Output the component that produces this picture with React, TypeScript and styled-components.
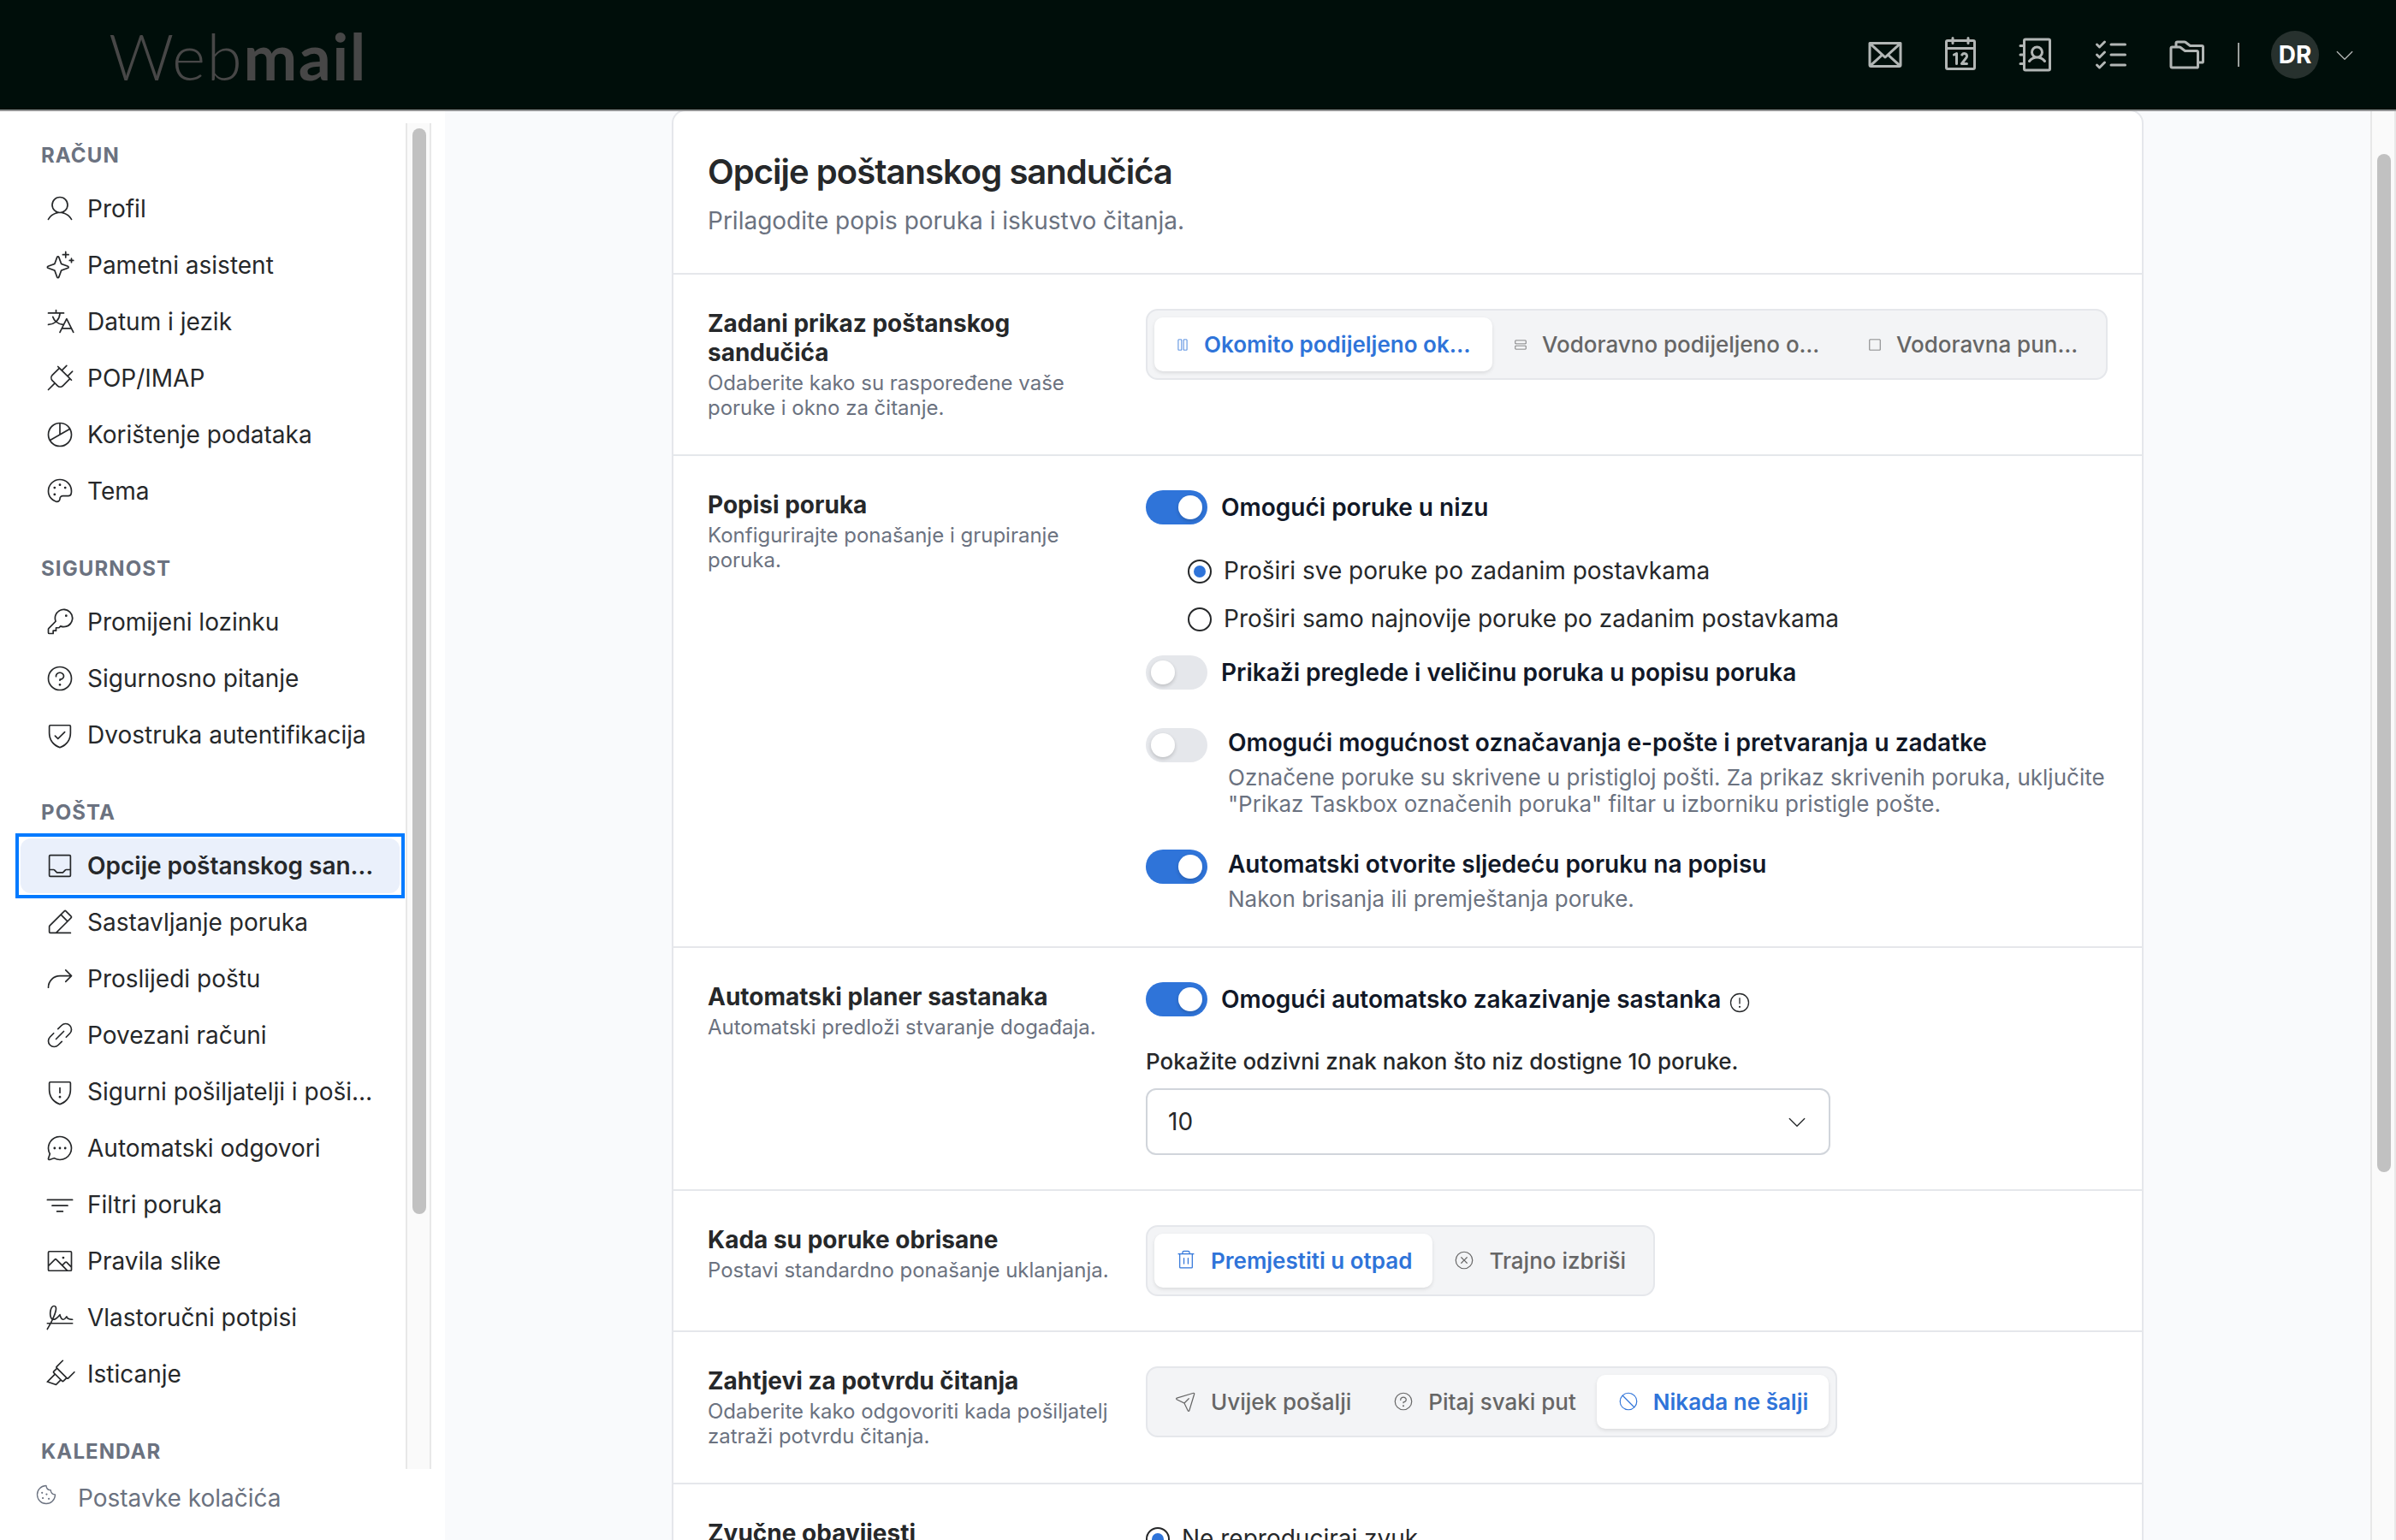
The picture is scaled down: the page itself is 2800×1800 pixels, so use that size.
import React from "react";
import styled, { createGlobalStyle } from "styled-components";
import type { IconType } from "react-icons";
import {
  PiEnvelope, PiCalendar, PiAddressBook, PiListChecks, PiFolders, PiCaretDownLight,
  PiUserLight, PiSparkleLight, PiTranslateLight, PiPlugLight, PiChartPieLight, PiPaletteLight,
  PiKeyLight, PiQuestionLight, PiShieldCheckLight, PiTrayLight, PiPencilSimpleLineLight,
  PiArrowBendUpRightLight, PiLinkSimpleLight, PiShieldWarningLight, PiChatCircleDotsLight,
  PiFunnelSimpleLight, PiImageLight, PiSignatureLight, PiHighlighterLight, PiCookieLight,
  PiWarningCircleLight, PiTrashLight, PiXCircleLight, PiPaperPlaneTiltLight, PiProhibitLight,
  PiColumnsLight, PiRowsLight, PiSquareLight,
} from "react-icons/pi";

const ink = "#26282a";
const muted = "#6b7280";
const line = "#e5e7eb";
const accent = "#2f74d9";

const GlobalStyle = createGlobalStyle`
  *, *::before, *::after { box-sizing: border-box; }
  body {
    margin: 0;
    font-family: Inter, "Liberation Sans", sans-serif;
    color: ${ink};
    background: #f9fafc;
    overflow: hidden;
  }
  svg { display: block; flex: none; }
`;

const Page = styled.div`
  display: flex;
  flex-direction: column;
  width: 2800px;
  height: 1800px;
  overflow: hidden;
`;

/* Header */
const Header = styled.header`
  flex: none;
  display: flex;
  align-items: center;
  justify-content: space-between;
  height: 130px;
  padding: 0 46px 0 127px;
  background: #000e0a;
  border-bottom: 2px solid #929394;
`;
const Logo = styled.div`
  padding-top: 1px;
  font: 300 75px/92px Lato, sans-serif;
  color: #474747;
  letter-spacing: 1.5px;
  b { font-weight: 700; }
`;
const HeaderTools = styled.nav`
  display: flex;
  align-items: center;
  color: #b2b6b5;
`;
const ToolIcons = styled.div`
  display: flex;
  gap: 40px;
`;
const Divider = styled.span`
  width: 2px;
  height: 28px;
  margin: 0 37px 0 36px;
  background: #9a9f9d;
`;
const Avatar = styled.span`
  display: flex;
  align-items: center;
  justify-content: center;
  width: 56px;
  height: 56px;
  margin-right: 16px;
  border-radius: 50%;
  background: #27312e;
  color: #fff;
  font-size: 28px;
  font-weight: 700;
`;

const Body = styled.div`
  flex: 1;
  display: flex;
  min-height: 0;
`;

/* Sidebar */
const Sidebar = styled.aside`
  flex: none;
  display: flex;
  flex-direction: column;
  width: 520px;
  padding-top: 14px;
  background: #fff;
`;
const NavScroller = styled.div`
  flex: none;
  display: flex;
  height: 1573px;
`;
const NavList = styled.nav`
  width: 474px;
  height: 100%;
  padding: 0 7px 0 24px;
  overflow: hidden;
`;
const Group = styled.section`
  padding-top: 44px;
  &:first-child { padding-top: 23px; }
`;
const GroupTitle = styled.h2`
  margin: 0;
  padding: 0 24px 15px;
  font-size: 24px;
  line-height: 30px;
  font-weight: 700;
  letter-spacing: 1.1px;
  color: ${muted};
`;
const Items = styled.div`
  display: flex;
  flex-direction: column;
  gap: 2px;
`;
const NavItem = styled.a<{ $active?: boolean }>`
  display: flex;
  align-items: center;
  gap: 14px;
  height: 64px;
  padding: 0 28px;
  border-radius: 12px;
  font-size: 28px;
  white-space: nowrap;
  font-weight: ${(p) => (p.$active ? 600 : 400)};
  background: ${(p) => (p.$active ? "#eaf0fb" : "transparent")};
`;
/* Square keyboard-focus ring around the rounded link */
const FocusRing = styled.div<{ $on?: boolean }>`
  outline: ${(p) => (p.$on ? "4px solid #007aff" : "none")};
  outline-offset: 2px;
`;
const CookieLink = styled.a`
  display: flex;
  align-items: center;
  gap: 23px;
  padding: 16px 0 0 40px;
  font-size: 28px;
  line-height: 34px;
  color: ${muted};
  svg { margin-bottom: 8px; }
`;

const Track = styled.div<{ $top: number }>`
  flex: none;
  width: 30px;
  padding: ${(p) => p.$top}px 6px 0;
  background: #fafafa;
  border: solid #e8e8e8;
  border-width: 0 2px;
`;
const Thumb = styled.div<{ $h: number }>`
  width: 16px;
  height: ${(p) => p.$h}px;
  border-radius: 8px;
  background: #c1c1c1;
`;

/* Content */
const Main = styled.main`
  flex: 1;
  display: flex;
  justify-content: center;
  overflow: hidden;
`;
const Card = styled.div`
  flex: none;
  width: 1720px;
  height: 2000px;
  margin-top: -2px;
  background: #fff;
  border: 2px solid ${line};
  border-radius: 16px;
`;
const CardHead = styled.div`
  height: 191px;
  padding: 47px 40px 0;
  border-bottom: 2px solid ${line};
`;
const Title = styled.h1`
  margin: 0;
  font-size: 40px;
  line-height: 48px;
  font-weight: 600;
  letter-spacing: -0.98px;
`;
const Subtitle = styled.p`
  margin: 16px 0 0;
  font-size: 28px;
  line-height: 34px;
  color: ${muted};
`;
const Row = styled.section`
  display: grid;
  grid-template-columns: 472px 1124px;
  column-gap: 40px;
  padding: 40px;
  border-bottom: 2px solid ${line};
`;
const Intro = styled.div`
  padding-top: 1px;
  margin-bottom: -1px;
`;
const RowTitle = styled.h3`
  margin: 0;
  font-size: 28px;
  line-height: 33.6px;
  font-weight: 700;
`;
const RowText = styled.p`
  margin: 5px 0 0;
  font-size: 24px;
  line-height: 28.8px;
  color: ${muted};
`;
const Controls = styled.div<{ $top?: number }>`
  display: flex;
  flex-direction: column;
  align-items: flex-start;
  padding-top: ${(p) => p.$top ?? 0}px;
`;

const Segments = styled.div`
  display: inline-flex;
  height: 83px;
  padding: 8px;
  background: #f3f4f6;
  border: 2px solid ${line};
  border-radius: 14px;
`;
const Segment = styled.button<{ $on?: boolean; $w?: number }>`
  display: flex;
  align-items: center;
  gap: 16px;
  width: ${(p) => (p.$w ? `${p.$w}px` : "auto")};
  padding: 0 24px;
  border: 0;
  border-radius: 10px;
  font: ${(p) => (p.$on ? 600 : 500)} 26px Inter, sans-serif;
  white-space: nowrap;
  color: ${(p) => (p.$on ? accent : "#666")};
  background: ${(p) => (p.$on ? "#fff" : "transparent")};
  box-shadow: ${(p) => (p.$on ? "0 2px 4px rgba(0, 0, 0, 0.1)" : "none")};
`;

const ToggleRow = styled.div<{ $gap?: number; $rich?: boolean }>`
  display: flex;
  align-items: ${(p) => (p.$rich ? "flex-start" : "center")};
  gap: ${(p) => (p.$rich ? 24 : 16)}px;
  margin-top: ${(p) => p.$gap ?? 0}px;
`;
const Switch = styled.span<{ $on?: boolean }>`
  flex: none;
  display: flex;
  justify-content: ${(p) => (p.$on ? "flex-end" : "flex-start")};
  width: 72px;
  height: 40px;
  padding: 6px;
  border-radius: 20px;
  background: ${(p) => (p.$on ? accent : "#e5e7eb")};
  &::after {
    content: "";
    width: 28px;
    height: 28px;
    border-radius: 50%;
    background: #fff;
    box-shadow: 0 2px 4px rgba(0, 0, 0, 0.18);
  }
`;
const ToggleLabel = styled.span`
  font-size: 28px;
  line-height: 34px;
  font-weight: 600;
  color: #111827;
`;
const ToggleBody = styled.div`
  display: flex;
  flex-direction: column;
  gap: 8px;
`;
const ToggleHint = styled.span`
  font-size: 26px;
  line-height: 31px;
  color: ${muted};
`;
const InfoIcon = styled(PiWarningCircleLight)`
  margin: 8px 0 0 -8px;
`;

const Radios = styled.div`
  display: flex;
  flex-direction: column;
  gap: 28px;
  margin: 41px 0 0 49px;
`;
const RadioRow = styled.label`
  display: flex;
  align-items: center;
  gap: 14px;
  height: 28px;
  font-size: 28px;
  line-height: 28px;
  span { padding-bottom: 2px; }
`;
const RadioDot = styled.i<{ $on?: boolean }>`
  display: flex;
  align-items: center;
  justify-content: center;
  width: 28px;
  height: 28px;
  border: 2px solid ${ink};
  border-radius: 50%;
  background: #fff;
  &::after {
    content: "";
    width: 14px;
    height: 14px;
    border-radius: 50%;
    background: ${(p) => (p.$on ? accent : "transparent")};
  }
`;
const FieldLabel = styled.div`
  margin-top: 37px;
  font-size: 26px;
  line-height: 31px;
  font-weight: 500;
`;
const Select = styled.div`
  display: flex;
  align-items: center;
  justify-content: space-between;
  width: 800px;
  height: 78px;
  margin-top: 16px;
  padding: 0 23px 0 24px;
  border: 2px solid #d1d5db;
  border-radius: 12px;
  font-size: 28px;
`;

type NavEntry = [IconType, string, boolean?];
const groups: { title: string; items: NavEntry[] }[] = [
  {
    title: "RAČUN",
    items: [
      [PiUserLight, "Profil"],
      [PiSparkleLight, "Pametni asistent"],
      [PiTranslateLight, "Datum i jezik"],
      [PiPlugLight, "POP/IMAP"],
      [PiChartPieLight, "Korištenje podataka"],
      [PiPaletteLight, "Tema"],
    ],
  },
  {
    title: "SIGURNOST",
    items: [
      [PiKeyLight, "Promijeni lozinku"],
      [PiQuestionLight, "Sigurnosno pitanje"],
      [PiShieldCheckLight, "Dvostruka autentifikacija"],
    ],
  },
  {
    title: "POŠTA",
    items: [
      [PiTrayLight, "Opcije poštanskog san…", true],
      [PiPencilSimpleLineLight, "Sastavljanje poruka"],
      [PiArrowBendUpRightLight, "Proslijedi poštu"],
      [PiLinkSimpleLight, "Povezani računi"],
      [PiShieldWarningLight, "Sigurni pošiljatelji i poši…"],
      [PiChatCircleDotsLight, "Automatski odgovori"],
      [PiFunnelSimpleLight, "Filtri poruka"],
      [PiImageLight, "Pravila slike"],
      [PiSignatureLight, "Vlastoručni potpisi"],
      [PiHighlighterLight, "Isticanje"],
    ],
  },
  { title: "KALENDAR", items: [] },
];

export default function App() {
  return (
    <Page>
      <GlobalStyle />
      <Header>
        <Logo>Web<b>mail</b></Logo>
        <HeaderTools>
          <ToolIcons>
            <PiEnvelope size={48} />
            <PiCalendar size={48} />
            <PiAddressBook size={48} />
            <PiListChecks size={48} />
            <PiFolders size={48} />
          </ToolIcons>
          <Divider />
          <Avatar>DR</Avatar>
          <PiCaretDownLight size={28} />
        </HeaderTools>
      </Header>
      <Body>
        <Sidebar>
          <NavScroller>
            <NavList>
              {groups.map((g) => (
                <Group key={g.title}>
                  <GroupTitle>{g.title}</GroupTitle>
                  <Items>
                    {g.items.map(([Icon, label, active]) => (
                      <FocusRing key={label} $on={active}>
                        <NavItem $active={active}>
                          <Icon size={36} />
                          {label}
                        </NavItem>
                      </FocusRing>
                    ))}
                  </Items>
                </Group>
              ))}
            </NavList>
            <Track $top={6}><Thumb $h={1269} /></Track>
          </NavScroller>
          <CookieLink><PiCookieLight size={28} />Postavke kolačića</CookieLink>
        </Sidebar>
        <Main>
          <Card>
            <CardHead>
              <Title>Opcije poštanskog sandučića</Title>
              <Subtitle>Prilagodite popis poruka i iskustvo čitanja.</Subtitle>
            </CardHead>
            <Row>
              <Intro>
                <RowTitle>Zadani prikaz poštanskog sandučića</RowTitle>
                <RowText>Odaberite kako su raspoređene vaše poruke i okno za čitanje.</RowText>
              </Intro>
              <Controls>
                <Segments>
                  <Segment $on $w={395}><PiColumnsLight size={18} />Okomito podijeljeno ok…</Segment>
                  <Segment $w={414}><PiRowsLight size={18} />Vodoravno podijeljeno o…</Segment>
                  <Segment $w={295}><PiSquareLight size={18} />Vodoravna pun…</Segment>
                </Segments>
              </Controls>
            </Row>
            <Row>
              <Intro>
                <RowTitle>Popisi poruka</RowTitle>
                <RowText>Konfigurirajte ponašanje i grupiranje poruka.</RowText>
              </Intro>
              <Controls>
                <ToggleRow>
                  <Switch $on />
                  <ToggleLabel>Omogući poruke u nizu</ToggleLabel>
                </ToggleRow>
                <Radios>
                  <RadioRow><RadioDot $on /><span>Proširi sve poruke po zadanim postavkama</span></RadioRow>
                  <RadioRow><RadioDot /><span>Proširi samo najnovije poruke po zadanim postavkama</span></RadioRow>
                </Radios>
                <ToggleRow $gap={28}>
                  <Switch />
                  <ToggleLabel>Prikaži preglede i veličinu poruka u popisu poruka</ToggleLabel>
                </ToggleRow>
                <ToggleRow $gap={45} $rich>
                  <Switch />
                  <ToggleBody>
                    <ToggleLabel>Omogući mogućnost označavanja e-pošte i pretvaranja u zadatke</ToggleLabel>
                    <ToggleHint>
                      Označene poruke su skrivene u pristigloj pošti. Za prikaz skrivenih poruka, uključite "Prikaz
                      Taskbox označenih poruka" filtar u izborniku pristigle pošte.
                    </ToggleHint>
                  </ToggleBody>
                </ToggleRow>
                <ToggleRow $gap={38} $rich>
                  <Switch $on />
                  <ToggleBody>
                    <ToggleLabel>Automatski otvorite sljedeću poruku na popisu</ToggleLabel>
                    <ToggleHint>Nakon brisanja ili premještanja poruke.</ToggleHint>
                  </ToggleBody>
                </ToggleRow>
              </Controls>
            </Row>
            <Row>
              <Intro>
                <RowTitle>Automatski planer sastanaka</RowTitle>
                <RowText>Automatski predloži stvaranje događaja.</RowText>
              </Intro>
              <Controls>
                <ToggleRow>
                  <Switch $on />
                  <ToggleLabel>Omogući automatsko zakazivanje sastanka</ToggleLabel>
                  <InfoIcon size={28} />
                </ToggleRow>
                <FieldLabel>Pokažite odzivni znak nakon što niz dostigne 10 poruke.</FieldLabel>
                <Select>10<PiCaretDownLight size={28} /></Select>
              </Controls>
            </Row>
            <Row>
              <Intro>
                <RowTitle>Kada su poruke obrisane</RowTitle>
                <RowText>Postavi standardno ponašanje uklanjanja.</RowText>
              </Intro>
              <Controls>
                <Segments>
                  <Segment $on><PiTrashLight size={26} />Premjestiti u otpad</Segment>
                  <Segment><PiXCircleLight size={26} />Trajno izbriši</Segment>
                </Segments>
              </Controls>
            </Row>
            <Row>
              <Intro>
                <RowTitle>Zahtjevi za potvrdu čitanja</RowTitle>
                <RowText>Odaberite kako odgovoriti kada pošiljatelj zatraži potvrdu čitanja.</RowText>
              </Intro>
              <Controls>
                <Segments>
                  <Segment><PiPaperPlaneTiltLight size={26} />Uvijek pošalji</Segment>
                  <Segment><PiQuestionLight size={26} />Pitaj svaki put</Segment>
                  <Segment $on><PiProhibitLight size={26} />Nikada ne šalji</Segment>
                </Segments>
              </Controls>
            </Row>
            <Row>
              <Intro>
                <RowTitle>Zvučne obavijesti</RowTitle>
              </Intro>
              <Controls $top={10}>
                <RadioRow><RadioDot $on /><span>Ne reproduciraj zvuk</span></RadioRow>
              </Controls>
            </Row>
          </Card>
        </Main>
        <Track $top={50}><Thumb $h={1190} /></Track>
      </Body>
    </Page>
  );
}
